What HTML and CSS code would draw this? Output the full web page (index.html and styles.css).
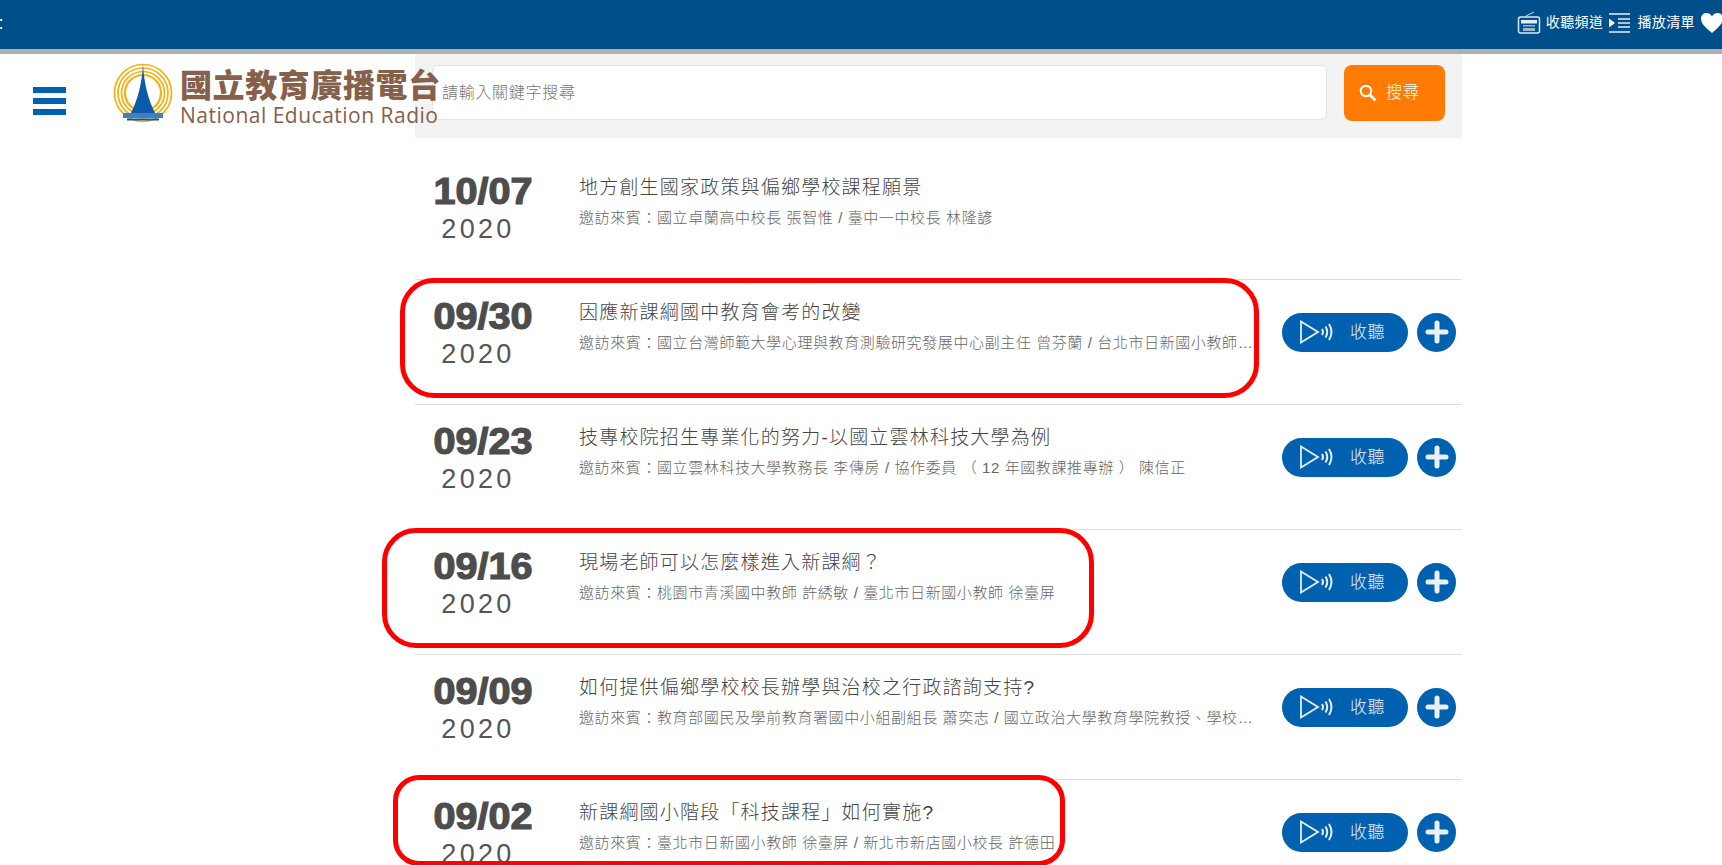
FILE: index.html
```html
<!DOCTYPE html>
<html lang="zh-Hant">
<head>
  <meta charset="UTF-8">
  <title>國立教育廣播電台</title>
  <link rel="stylesheet" href="styles.css">
</head>
<body>
  <div class="topbar">
    <span class="top-cut">：</span>
    <svg class="tune-icon" width="24" height="24" viewBox="0 0 24 24"><path d="M17 1 L9 5" stroke="#cfe0ee" stroke-width="1" fill="none"/><rect x="1.500" y="6" width="21" height="16" rx="2" fill="#00508c" stroke="#dbe7f1" stroke-width="1.500"/><rect x="4" y="9" width="16" height="3.500" fill="#e4edf5"/><rect x="6" y="14" width="12" height="1.500" fill="#9db9d2"/><rect x="6" y="17" width="12" height="3" fill="#9db9d2"/></svg>
    <span class="top-link">收聽頻道</span>
    <svg class="list-icon" width="22" height="20" viewBox="0 0 22 20"><path d="M0 1h21M0 19h21M9 6h12M9 10h12M9 14h12" stroke="#e8f0f6" stroke-width="1.600" fill="none"/><path d="M0 5.500 L6 10 L0 14.500Z" fill="#fff"/></svg>
    <span class="top-link top-link-last">播放清單</span>
    <svg class="heart-icon" width="24" height="22" viewBox="0 0 24 22"><path d="M12 21 C5 15 1 11.500 1 6.500 C1 3 3.500 1 6.500 1 C9 1 11 2.500 12 4.500 C13 2.500 15 1 17.500 1 C20.500 1 23 3 23 6.500 C23 11.500 19 15 12 21Z" fill="#fff"/></svg>
  </div>

  <div class="header">
    <div class="menu-icon"><span></span><span></span><span></span></div>
    <div class="logo">
      <svg class="logo-mark" width="60" height="62" viewBox="1 0 60 62">
        <g fill="none" stroke="#f5b014" stroke-width="1.700">
          <circle cx="31" cy="30" r="28.500"/>
          <circle cx="31" cy="30" r="25"/>
          <circle cx="31" cy="30" r="21.500"/>
          <circle cx="31" cy="30" r="18" stroke-width="2.200"/>
        </g>
        <path d="M31 1 C32 22 37 38 43 50 H19 C25 38 30 22 31 1Z" fill="#0a5cab"/>
        <rect x="11" y="50" width="40" height="5" fill="#3f7fc0"/>
        <rect x="15" y="55.500" width="32" height="2" fill="#0a5cab"/>
      </svg>
      <div class="logo-text">
        <div class="logo-zh">國立教育廣播電台</div>
        <div class="logo-en">National Education Radio</div>
      </div>
    </div>
    <div class="search-panel">
      <input class="search-input" type="text" placeholder="請輸入關鍵字搜尋">
      <button class="search-btn">
        <svg width="18" height="18" viewBox="0 0 18 18"><circle cx="7" cy="7" r="5.200" fill="none" stroke="#fff" stroke-width="2.200"/><path d="M11 11 L16.500 16.500" stroke="#fff" stroke-width="2.600"/></svg>
        搜尋
      </button>
    </div>
  </div>

  <div class="list">
    <div class="row">
      <div class="date"><div class="md">10/07</div><div class="year">2020</div></div>
      <div class="info">
        <div class="title">地方創生國家政策與偏鄉學校課程願景</div>
        <div class="guest">邀訪來賓：國立卓蘭高中校長 張智惟 / 臺中一中校長 林隆諺</div>
      </div>
    </div>
    <div class="row">
      <div class="date"><div class="md">09/30</div><div class="year">2020</div></div>
      <div class="info">
        <div class="title">因應新課綱國中教育會考的改變</div>
        <div class="guest">邀訪來賓：國立台灣師範大學心理與教育測驗研究發展中心副主任 曾芬蘭 / 台北市日新國小教師 徐臺屏</div>
      </div>
      <div class="actions">
        <button class="play-btn">
          <svg width="36" height="24" viewBox="0 0 36 24"><path d="M1 1.500 L18 12 L1 22.500Z" fill="none" stroke="#e6eff8" stroke-width="1.800"/><path d="M22 9 Q24 12 22 15M25.500 6.500 Q29 12 25.500 17.500M29 4 Q34 12 29 20" fill="none" stroke="#e6eff8" stroke-width="2"/></svg>
          <span>收聽</span>
        </button>
        <button class="add-btn"><svg width="24" height="24" viewBox="0 0 24 24"><path d="M12 3V21M3 12H21" stroke="#e9f0f7" stroke-width="5" stroke-linecap="round"/></svg></button>
      </div>
      <div class="mark mark-a"></div>
    </div>
    <div class="row">
      <div class="date"><div class="md">09/23</div><div class="year">2020</div></div>
      <div class="info">
        <div class="title">技專校院招生專業化的努力-以國立雲林科技大學為例</div>
        <div class="guest">邀訪來賓：國立雲林科技大學教務長 李傳房 / 協作委員 （ 12 年國教課推專辦 ） 陳信正</div>
      </div>
      <div class="actions">
        <button class="play-btn">
          <svg width="36" height="24" viewBox="0 0 36 24"><path d="M1 1.500 L18 12 L1 22.500Z" fill="none" stroke="#e6eff8" stroke-width="1.800"/><path d="M22 9 Q24 12 22 15M25.500 6.500 Q29 12 25.500 17.500M29 4 Q34 12 29 20" fill="none" stroke="#e6eff8" stroke-width="2"/></svg>
          <span>收聽</span>
        </button>
        <button class="add-btn"><svg width="24" height="24" viewBox="0 0 24 24"><path d="M12 3V21M3 12H21" stroke="#e9f0f7" stroke-width="5" stroke-linecap="round"/></svg></button>
      </div>
    </div>
    <div class="row">
      <div class="date"><div class="md">09/16</div><div class="year">2020</div></div>
      <div class="info">
        <div class="title">現場老師可以怎麼樣進入新課綱？</div>
        <div class="guest">邀訪來賓：桃園市青溪國中教師 許綉敏 / 臺北市日新國小教師 徐臺屏</div>
      </div>
      <div class="actions">
        <button class="play-btn">
          <svg width="36" height="24" viewBox="0 0 36 24"><path d="M1 1.500 L18 12 L1 22.500Z" fill="none" stroke="#e6eff8" stroke-width="1.800"/><path d="M22 9 Q24 12 22 15M25.500 6.500 Q29 12 25.500 17.500M29 4 Q34 12 29 20" fill="none" stroke="#e6eff8" stroke-width="2"/></svg>
          <span>收聽</span>
        </button>
        <button class="add-btn"><svg width="24" height="24" viewBox="0 0 24 24"><path d="M12 3V21M3 12H21" stroke="#e9f0f7" stroke-width="5" stroke-linecap="round"/></svg></button>
      </div>
      <div class="mark mark-b"></div>
    </div>
    <div class="row">
      <div class="date"><div class="md">09/09</div><div class="year">2020</div></div>
      <div class="info">
        <div class="title">如何提供偏鄉學校校長辦學與治校之行政諮詢支持?</div>
        <div class="guest">邀訪來賓：教育部國民及學前教育署國中小組副組長 蕭奕志 / 國立政治大學教育學院教授、學校行政研究中心主任</div>
      </div>
      <div class="actions">
        <button class="play-btn">
          <svg width="36" height="24" viewBox="0 0 36 24"><path d="M1 1.500 L18 12 L1 22.500Z" fill="none" stroke="#e6eff8" stroke-width="1.800"/><path d="M22 9 Q24 12 22 15M25.500 6.500 Q29 12 25.500 17.500M29 4 Q34 12 29 20" fill="none" stroke="#e6eff8" stroke-width="2"/></svg>
          <span>收聽</span>
        </button>
        <button class="add-btn"><svg width="24" height="24" viewBox="0 0 24 24"><path d="M12 3V21M3 12H21" stroke="#e9f0f7" stroke-width="5" stroke-linecap="round"/></svg></button>
      </div>
    </div>
    <div class="row">
      <div class="date"><div class="md">09/02</div><div class="year">2020</div></div>
      <div class="info">
        <div class="title">新課綱國小階段「科技課程」如何實施?</div>
        <div class="guest">邀訪來賓：臺北市日新國小教師 徐臺屏 / 新北市新店國小校長 許德田</div>
      </div>
      <div class="actions">
        <button class="play-btn">
          <svg width="36" height="24" viewBox="0 0 36 24"><path d="M1 1.500 L18 12 L1 22.500Z" fill="none" stroke="#e6eff8" stroke-width="1.800"/><path d="M22 9 Q24 12 22 15M25.500 6.500 Q29 12 25.500 17.500M29 4 Q34 12 29 20" fill="none" stroke="#e6eff8" stroke-width="2"/></svg>
          <span>收聽</span>
        </button>
        <button class="add-btn"><svg width="24" height="24" viewBox="0 0 24 24"><path d="M12 3V21M3 12H21" stroke="#e9f0f7" stroke-width="5" stroke-linecap="round"/></svg></button>
      </div>
      <div class="mark mark-c"></div>
    </div>
  </div>
</body>
</html>
```

FILE: styles.css
```css
html, body {
  height: 865px;
  overflow: hidden;
}
body {
  margin: 0;
  background-color: #ffffff;
  font-family: "Liberation Sans", "Noto Sans CJK TC", sans-serif;
  color: #4d4d4d;
}
.topbar {
  height: 54px;
  box-sizing: border-box;
  background-color: #004e8a;
  border-bottom: 5px solid #afafaf;
  padding-bottom: 4px;
  display: flex;
  align-items: center;
  justify-content: flex-end;
  overflow: hidden;
  margin-right: -2px;
}
.top-cut {
  color: #ffffff;
  font-size: 14px;
  margin-left: -6px;
  margin-right: auto;
}
.tune-icon {
  margin-right: 5px;
}
.top-link {
  color: #ffffff;
  font-size: 14px;
  letter-spacing: 0.4px;
  margin-right: 4px;
  padding-bottom: 3px;
}
.top-link-last {
  margin-right: 5px;
}
.list-icon {
  margin-left: 2px;
  margin-right: 6px;
}
.header {
  display: flex;
  height: 84px;
}
.menu-icon {
  width: 33px;
  margin: 33px 0 0 33px;
}
.menu-icon span {
  display: block;
  height: 6px;
  background-color: #0061b0;
  margin-bottom: 5px;
}
.logo {
  display: flex;
  width: 0;
  margin-left: 47px;
  margin-top: 9px;
  position: relative;
  z-index: 2;
}
.logo-mark {
  flex: none;
}
.logo-text {
  flex: none;
  margin-left: 7px;
  color: #86604b;
}
.logo-zh {
  font-family: "Noto Sans CJK TC", sans-serif;
  font-size: 32px;
  font-weight: 900;
  line-height: 40px;
  letter-spacing: 0.6px;
  white-space: nowrap;
}
.logo-en {
  font-family: "Open Sans", sans-serif;
  font-size: 21px;
  line-height: 24px;
  letter-spacing: 0.5px;
  white-space: nowrap;
}
.search-panel {
  margin-left: 302px;
  width: 1047px;
  box-sizing: border-box;
  background-color: #f3f3f3;
  display: flex;
  padding: 11px 17px 0 17px;
  gap: 17px;
}
.search-input {
  flex: 1;
  height: 55px;
  box-sizing: border-box;
  border: 1px solid #e2e2e2;
  border-radius: 6px;
  background-color: #ffffff;
  padding: 0 9px;
  font-family: "Liberation Sans", "Noto Sans CJK TC", sans-serif;
  font-size: 16px;
  font-weight: 300;
  letter-spacing: 0.7px;
}
.search-input::placeholder {
  color: #777777;
}
.search-btn {
  width: 101px;
  height: 56px;
  border: none;
  border-radius: 8px;
  background-color: #ff7b03;
  color: #ffffff;
  font-family: "Liberation Sans", "Noto Sans CJK TC", sans-serif;
  font-size: 16.500px;
  font-weight: 300;
  display: flex;
  align-items: center;
  gap: 9px;
  padding: 0 0 4px 15px;
}
.search-btn svg {
  margin-top: 4px;
}
.list {
  margin-left: 415px;
  width: 1047px;
  padding-top: 17px;
}
.row {
  height: 125px;
  box-sizing: border-box;
  border-bottom: 1px solid #dddddd;
  display: flex;
  position: relative;
}
.date {
  width: 136px;
  text-align: center;
  flex: none;
  padding-top: 16px;
}
.md {
  font-size: 36px;
  font-weight: bold;
  line-height: 41px;
  color: #4d4d4d;
  -webkit-text-stroke: 1.200px #4d4d4d;
  transform: scaleX(1.1);
}
.year {
  font-size: 27px;
  line-height: 35px;
  letter-spacing: 3.300px;
  color: #555555;
  padding-right: 10px;
}
.info {
  width: 676px;
  margin-left: 28px;
  flex: none;
  padding-top: 20px;
}
.title {
  font-size: 19px;
  font-weight: 300;
  line-height: 26px;
  letter-spacing: 1.200px;
  color: #444444;
  white-space: nowrap;
}
.guest {
  font-size: 15px;
  font-weight: 300;
  line-height: 20px;
  margin-top: 7px;
  letter-spacing: 0.6px;
  color: #666666;
  white-space: nowrap;
  overflow: hidden;
  text-overflow: ellipsis;
}
.actions {
  display: flex;
  align-items: center;
  gap: 9px;
  margin-left: 27px;
  height: 40px;
  margin-top: 32px;
}
.play-btn {
  width: 126px;
  height: 39px;
  border: none;
  border-radius: 20px;
  background-color: #0061b0;
  color: #e9f0f7;
  font-family: "Liberation Sans", "Noto Sans CJK TC", sans-serif;
  font-size: 17px;
  font-weight: 300;
  letter-spacing: 0.5px;
  display: flex;
  align-items: center;
  padding: 0 0 0 18px;
  gap: 14px;
}
.play-btn span {
  padding-bottom: 4px;
}
.add-btn {
  width: 39px;
  height: 39px;
  border: none;
  border-radius: 50%;
  background-color: #0061b0;
  display: flex;
  align-items: center;
  justify-content: center;
  padding: 0;
}
.mark {
  position: absolute;
  border: 5px solid #ff0000;
  border-radius: 34px;
  box-sizing: border-box;
  pointer-events: none;
}
.mark-a {
  left: -15px;
  top: -2px;
  width: 859px;
  height: 120px;
}
.mark-b {
  left: -33px;
  top: -2px;
  width: 712px;
  height: 120px;
}
.mark-c {
  left: -22px;
  top: -5px;
  width: 672px;
  height: 91px;
  border-radius: 26px;
}
```
